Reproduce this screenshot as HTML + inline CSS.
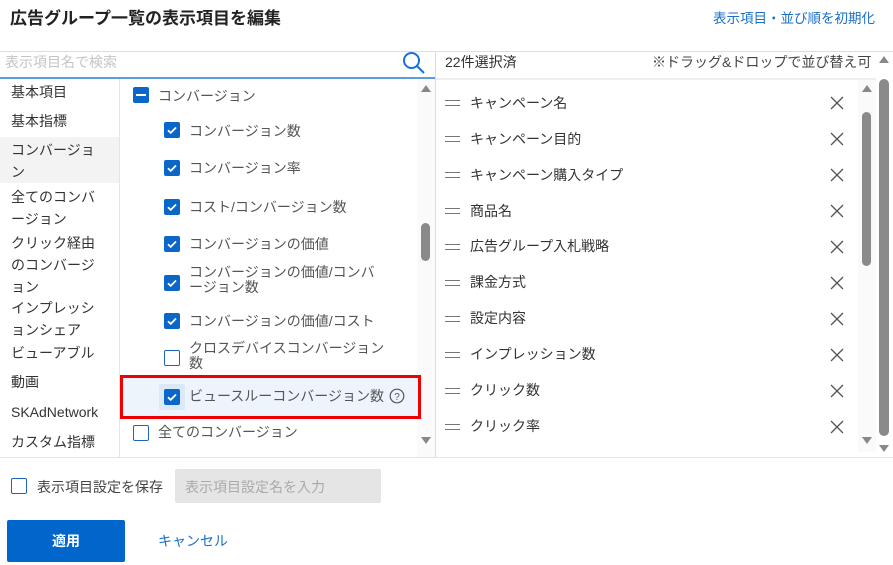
<!DOCTYPE html>
<html><head><meta charset="utf-8"><style>
*{margin:0;padding:0;box-sizing:border-box}
body{width:893px;height:565px;overflow:hidden;background:#fff;font-family:"Liberation Sans","Noto Sans CJK JP",sans-serif;color:#333;position:relative}
.a{position:absolute;white-space:nowrap}
.t{font-size:14px;color:#555}
.cb{position:absolute;width:16px;height:16px;border-radius:2px;background:#0a66c8}
.cb svg{position:absolute;left:0;top:0}
.ecb{position:absolute;width:16px;height:16px;border:1.5px solid #1a66c0;border-radius:2px;background:#fff}
.lc{position:absolute;left:11px;font-size:14px;color:#333;line-height:22px;width:100px}
.rrow{position:absolute;left:444px;font-size:14px;color:#333}
.drag{position:absolute;left:445px;width:15px;height:6px;border-top:1.6px solid #777;border-bottom:1.6px solid #777}
.x{position:absolute;left:830px;width:14px;height:14px}
.up{position:absolute;width:0;height:0;border-left:5px solid transparent;border-right:5px solid transparent;border-bottom:7px solid #888}
.dn{position:absolute;width:0;height:0;border-left:5px solid transparent;border-right:5px solid transparent;border-top:7px solid #888}
</style></head><body>
<div class="a" style="left:10px;top:4px;font-size:17px;font-weight:bold;color:#222">広告グループ一覧の表示項目を編集</div>
<div class="a" style="left:713px;top:7px;font-size:13.5px;color:#1a70c8">表示項目・並び順を初期化</div>
<div class="a" style="left:0;top:51px;width:893px;height:1px;background:#ddd"></div>
<div class="a" style="left:5px;top:52px;font-size:14px;color:#c4c4c4">表示項目名で検索</div>
<svg class="a" style="left:402px;top:51px" width="24" height="24" viewBox="0 0 24 24"><circle cx="9.5" cy="9.5" r="7.5" fill="none" stroke="#1a70d8" stroke-width="2"/><line x1="15" y1="15" x2="22" y2="22" stroke="#1a70d8" stroke-width="2"/></svg>
<div class="a" style="left:0;top:77px;width:435px;height:2px;background:#5b9be0"></div>
<div class="a" style="left:435px;top:51px;width:1px;height:407px;background:#ddd"></div>
<div class="a" style="left:119px;top:79px;width:1px;height:378px;background:#e5e5e5"></div>
<div class="a" style="left:0;top:137px;width:119px;height:46px;background:#f3f3f3"></div>
<div class="lc" style="top:81px">基本項目</div>
<div class="lc" style="top:110px">基本指標</div>
<div class="lc" style="top:139px">コンバージョ<br>ン</div>
<div class="lc" style="top:186px">全てのコンバ<br>ージョン</div>
<div class="lc" style="top:232px">クリック経由<br>のコンバージ<br>ョン</div>
<div class="lc" style="top:297px">インプレッシ<br>ョンシェア</div>
<div class="lc" style="top:342px">ビューアブル</div>
<div class="lc" style="top:371px">動画</div>
<div class="lc" style="top:401px">SKAdNetwork</div>
<div class="lc" style="top:431px">カスタム指標</div>
<div class="a" style="left:417px;top:79px;width:18px;height:378px;background:#fafafa"></div>
<div class="up" style="left:421px;top:85px"></div>
<div class="dn" style="left:421px;top:437px"></div>
<div class="a" style="left:421px;top:223px;width:9px;height:38px;border-radius:5px;background:#8a8a8a"></div>
<div class="cb" style="left:133px;top:87px"><div style="position:absolute;left:3px;top:7px;width:10px;height:2px;background:#fff"></div></div>
<div class="a t" style="left:158px;top:86px;color:#555">コンバージョン</div>
<svg width="0" height="0" style="position:absolute"><defs><path id="ck" d="M4 8.2l2.7 2.7L12 5.5" fill="none" stroke="#fff" stroke-width="1.8"/></defs></svg>
<div class="cb" style="left:164px;top:122px"><svg width="16" height="16"><use href="#ck"/></svg></div>
<div class="a t" style="left:189px;top:121px">コンバージョン数</div>
<div class="cb" style="left:164px;top:160px"><svg width="16" height="16"><use href="#ck"/></svg></div>
<div class="a t" style="left:189px;top:158px">コンバージョン率</div>
<div class="cb" style="left:164px;top:199px"><svg width="16" height="16"><use href="#ck"/></svg></div>
<div class="a t" style="left:189px;top:197px">コスト/コンバージョン数</div>
<div class="cb" style="left:164px;top:236px"><svg width="16" height="16"><use href="#ck"/></svg></div>
<div class="a t" style="left:189px;top:234px">コンバージョンの価値</div>
<div class="cb" style="left:164px;top:275px"><svg width="16" height="16"><use href="#ck"/></svg></div>
<div class="a t" style="left:189px;top:265px;line-height:15px">コンバージョンの価値/コンバ<br>ージョン数</div>
<div class="cb" style="left:164px;top:313px"><svg width="16" height="16"><use href="#ck"/></svg></div>
<div class="a t" style="left:189px;top:311px">コンバージョンの価値/コスト</div>
<div class="ecb" style="left:164px;top:350px"></div>
<div class="a t" style="left:189px;top:341px;line-height:15px">クロスデバイスコンバージョン<br>数</div>
<div class="a" style="left:120px;top:375px;width:301px;height:44px;border:3px solid #e00;background:#eef4fc"></div>
<div class="a" style="left:159px;top:384px;width:26px;height:26px;background:#dbe8f8;border-radius:2px"></div>
<div class="cb" style="left:164px;top:389px"><svg width="16" height="16"><use href="#ck"/></svg></div>
<div class="a t" style="left:189px;top:386px">ビュースルーコンバージョン数</div>
<svg class="a" style="left:389px;top:388px" width="16" height="16" viewBox="0 0 16 16"><circle cx="8" cy="8" r="6.8" fill="none" stroke="#555" stroke-width="1.2"/><text x="8" y="12" font-size="10" text-anchor="middle" fill="#555" font-family="Liberation Sans">?</text></svg>
<div class="ecb" style="left:133px;top:425px"></div>
<div class="a t" style="left:158px;top:422px">全てのコンバージョン</div>
<div class="a" style="left:445px;top:52px;font-size:14px;color:#333">22件選択済</div>
<div class="a" style="left:652px;top:52px;font-size:14px;color:#444">※ドラッグ&amp;ドロップで並び替え可</div>
<div class="a" style="left:436px;top:78px;width:440px;height:2px;background:#eee"></div>
<div class="a" style="left:858px;top:80px;width:18px;height:372px;background:#fafafa"></div>
<div class="up" style="left:862px;top:85px"></div>
<div class="dn" style="left:862px;top:437px"></div>
<div class="a" style="left:862px;top:112px;width:9px;height:154px;border-radius:5px;background:#8a8a8a"></div>
<div class="up" style="left:879px;top:56px"></div>
<div class="dn" style="left:879px;top:445px"></div>
<div class="a" style="left:879px;top:79px;width:10px;height:357px;border-radius:5px;background:#8a8a8a"></div>
<div class="drag" style="top:100px"></div><div class="rrow" style="left:470px;top:93px">キャンペーン名</div>
<div class="drag" style="top:136px"></div><div class="rrow" style="left:470px;top:129px">キャンペーン目的</div>
<div class="drag" style="top:172px"></div><div class="rrow" style="left:470px;top:165px">キャンペーン購入タイプ</div>
<div class="drag" style="top:208px"></div><div class="rrow" style="left:470px;top:201px">商品名</div>
<div class="drag" style="top:244px"></div><div class="rrow" style="left:470px;top:236px">広告グループ入札戦略</div>
<div class="drag" style="top:280px"></div><div class="rrow" style="left:470px;top:272px">課金方式</div>
<div class="drag" style="top:316px"></div><div class="rrow" style="left:470px;top:308px">設定内容</div>
<div class="drag" style="top:352px"></div><div class="rrow" style="left:470px;top:344px">インプレッション数</div>
<div class="drag" style="top:388px"></div><div class="rrow" style="left:470px;top:380px">クリック数</div>
<div class="drag" style="top:424px"></div><div class="rrow" style="left:470px;top:416px">クリック率</div>
<svg class="x" style="top:96px"><path d="M1 1L13 13M13 1L1 13" stroke="#555" stroke-width="1.3"/></svg>
<svg class="x" style="top:132px"><path d="M1 1L13 13M13 1L1 13" stroke="#555" stroke-width="1.3"/></svg>
<svg class="x" style="top:168px"><path d="M1 1L13 13M13 1L1 13" stroke="#555" stroke-width="1.3"/></svg>
<svg class="x" style="top:204px"><path d="M1 1L13 13M13 1L1 13" stroke="#555" stroke-width="1.3"/></svg>
<svg class="x" style="top:240px"><path d="M1 1L13 13M13 1L1 13" stroke="#555" stroke-width="1.3"/></svg>
<svg class="x" style="top:276px"><path d="M1 1L13 13M13 1L1 13" stroke="#555" stroke-width="1.3"/></svg>
<svg class="x" style="top:312px"><path d="M1 1L13 13M13 1L1 13" stroke="#555" stroke-width="1.3"/></svg>
<svg class="x" style="top:348px"><path d="M1 1L13 13M13 1L1 13" stroke="#555" stroke-width="1.3"/></svg>
<svg class="x" style="top:384px"><path d="M1 1L13 13M13 1L1 13" stroke="#555" stroke-width="1.3"/></svg>
<svg class="x" style="top:420px"><path d="M1 1L13 13M13 1L1 13" stroke="#555" stroke-width="1.3"/></svg>
<div class="a" style="left:0;top:457px;width:893px;height:1px;background:#e5e5e5"></div>
<div class="ecb" style="left:11px;top:478px"></div>
<div class="a" style="left:37px;top:477px;font-size:14px;color:#444">表示項目設定を保存</div>
<div class="a" style="left:175px;top:469px;width:206px;height:34px;background:#e5e5e5;border-radius:2px"></div>
<div class="a" style="left:185px;top:477px;font-size:14px;color:#aaa">表示項目設定名を入力</div>
<div class="a" style="left:7px;top:520px;width:118px;height:42px;background:#0066cc;border-radius:2px;color:#fff;font-size:14px;font-weight:bold;text-align:center;line-height:42px">適用</div>
<div class="a" style="left:158px;top:531px;font-size:14px;color:#1a70c8">キャンセル</div>
</body></html>
